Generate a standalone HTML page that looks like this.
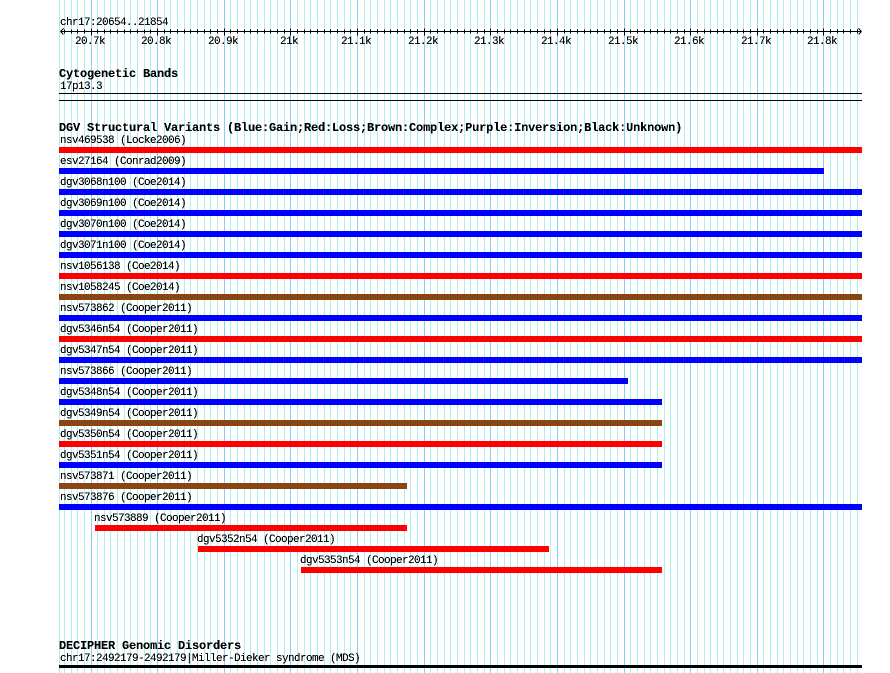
<!DOCTYPE html>
<html><head><meta charset="utf-8"><title>chr17 tracks</title>
<style>html,body{margin:0;padding:0;background:#fff;width:890px;height:673px;overflow:hidden}svg{display:block}
.s{font:11px "Liberation Mono",monospace;letter-spacing:-.6px;fill:#000}
.b{font:bold 12px "Liberation Mono",monospace;letter-spacing:-.2px;fill:#000}
</style></head><body>
<svg width="890" height="673" viewBox="0 0 890 673" xmlns="http://www.w3.org/2000/svg">
<defs><filter id="t" x="0" y="0" width="100%" height="100%" filterUnits="userSpaceOnUse" primitiveUnits="userSpaceOnUse"><feComponentTransfer><feFuncA type="linear" slope="2.2" intercept="-.35"/></feComponentTransfer></filter></defs>
<g shape-rendering="crispEdges" fill="none">
<path stroke="#afeeee" transform="translate(.5 0)" d="M59 0V673M64 0V673M71 0V673M77 0V673M84 0V673M97 0V673M104 0V673M110 0V673M117 0V673M124 0V673M130 0V673M137 0V673M144 0V673M150 0V673M164 0V673M170 0V673M177 0V673M184 0V673M190 0V673M197 0V673M204 0V673M210 0V673M217 0V673M230 0V673M237 0V673M244 0V673M250 0V673M257 0V673M264 0V673M270 0V673M277 0V673M284 0V673M297 0V673M304 0V673M310 0V673M317 0V673M324 0V673M330 0V673M337 0V673M344 0V673M350 0V673M364 0V673M370 0V673M377 0V673M384 0V673M390 0V673M397 0V673M404 0V673M410 0V673M417 0V673M430 0V673M437 0V673M444 0V673M450 0V673M457 0V673M464 0V673M470 0V673M477 0V673M484 0V673M497 0V673M504 0V673M510 0V673M517 0V673M524 0V673M530 0V673M537 0V673M544 0V673M550 0V673M564 0V673M570 0V673M577 0V673M584 0V673M590 0V673M597 0V673M604 0V673M610 0V673M617 0V673M630 0V673M637 0V673M644 0V673M650 0V673M657 0V673M664 0V673M670 0V673M677 0V673M684 0V673M697 0V673M704 0V673M710 0V673M717 0V673M723 0V673M730 0V673M737 0V673M743 0V673M750 0V673M763 0V673M770 0V673M777 0V673M783 0V673M790 0V673M797 0V673M803 0V673M810 0V673M817 0V673M830 0V673M837 0V673M843 0V673M850 0V673M857 0V673"/>
<path stroke="#87cefa" transform="translate(.5 0)" d="M91 0V673M157 0V673M224 0V673M290 0V673M357 0V673M424 0V673M490 0V673M557 0V673M624 0V673M690 0V673M757 0V673M823 0V673"/>
<path stroke="#000" transform="translate(.5 .5)" d="M60 31H861M60 31L63 28M60 31L63 34M861 31L858 28M861 31L858 34M64 29V33M71 29V33M77 29V33M84 29V33M97 29V33M104 29V33M110 29V33M117 29V33M124 29V33M130 29V33M137 29V33M144 29V33M150 29V33M164 29V33M170 29V33M177 29V33M184 29V33M190 29V33M197 29V33M204 29V33M210 29V33M217 29V33M230 29V33M237 29V33M244 29V33M250 29V33M257 29V33M264 29V33M270 29V33M277 29V33M284 29V33M297 29V33M304 29V33M310 29V33M317 29V33M324 29V33M330 29V33M337 29V33M344 29V33M350 29V33M364 29V33M370 29V33M377 29V33M384 29V33M390 29V33M397 29V33M404 29V33M410 29V33M417 29V33M430 29V33M437 29V33M444 29V33M450 29V33M457 29V33M464 29V33M470 29V33M477 29V33M484 29V33M497 29V33M504 29V33M510 29V33M517 29V33M524 29V33M530 29V33M537 29V33M544 29V33M550 29V33M564 29V33M570 29V33M577 29V33M584 29V33M590 29V33M597 29V33M604 29V33M610 29V33M617 29V33M630 29V33M637 29V33M644 29V33M650 29V33M657 29V33M664 29V33M670 29V33M677 29V33M684 29V33M697 29V33M704 29V33M710 29V33M717 29V33M723 29V33M730 29V33M737 29V33M743 29V33M750 29V33M763 29V33M770 29V33M777 29V33M783 29V33M790 29V33M797 29V33M803 29V33M810 29V33M817 29V33M830 29V33M837 29V33M843 29V33M850 29V33M857 29V33M91 28V35M157 28V35M224 28V35M290 28V35M357 28V35M424 28V35M490 28V35M557 28V35M624 28V35M690 28V35M757 28V35M823 28V35"/>
</g>
<g shape-rendering="crispEdges">
<rect x="59" y="93" width="803" height="1" fill="#000"/>
<rect x="59" y="100" width="803" height="1" fill="#000"/>
<rect x="59" y="147" width="803" height="6" fill="#f00"/>
<rect x="59" y="168" width="765" height="6" fill="#00f"/>
<rect x="59" y="189" width="803" height="6" fill="#00f"/>
<rect x="59" y="210" width="803" height="6" fill="#00f"/>
<rect x="59" y="231" width="803" height="6" fill="#00f"/>
<rect x="59" y="252" width="803" height="6" fill="#00f"/>
<rect x="59" y="273" width="803" height="6" fill="#f00"/>
<rect x="59" y="294" width="803" height="6" fill="#8b4513"/>
<rect x="59" y="315" width="803" height="6" fill="#00f"/>
<rect x="59" y="336" width="803" height="6" fill="#f00"/>
<rect x="59" y="357" width="803" height="6" fill="#00f"/>
<rect x="59" y="378" width="569" height="6" fill="#00f"/>
<rect x="59" y="399" width="603" height="6" fill="#00f"/>
<rect x="59" y="420" width="603" height="6" fill="#8b4513"/>
<rect x="59" y="441" width="603" height="6" fill="#f00"/>
<rect x="59" y="462" width="603" height="6" fill="#00f"/>
<rect x="59" y="483" width="348" height="6" fill="#8b4513"/>
<rect x="59" y="504" width="803" height="6" fill="#00f"/>
<rect x="95" y="525" width="312" height="6" fill="#f00"/>
<rect x="198" y="546" width="351" height="6" fill="#f00"/>
<rect x="301" y="567" width="361" height="6" fill="#f00"/>
<rect x="59" y="665" width="803" height="3" fill="#000"/>
</g>
<g filter="url(#t)">
<text class="s" x="60" y="25">chr17:20654..21854</text>
<text class="s" x="75" y="44">20.7k</text>
<text class="s" x="141" y="44">20.8k</text>
<text class="s" x="208" y="44">20.9k</text>
<text class="s" x="280" y="44">21k</text>
<text class="s" x="341" y="44">21.1k</text>
<text class="s" x="408" y="44">21.2k</text>
<text class="s" x="474" y="44">21.3k</text>
<text class="s" x="541" y="44">21.4k</text>
<text class="s" x="608" y="44">21.5k</text>
<text class="s" x="674" y="44">21.6k</text>
<text class="s" x="741" y="44">21.7k</text>
<text class="s" x="807" y="44">21.8k</text>
<text class="b" x="59" y="77">Cytogenetic Bands</text>
<text class="s" x="60" y="89">17p13.3</text>
<text class="b" x="59" y="131">DGV Structural Variants (Blue:Gain;Red:Loss;Brown:Complex;Purple:Inversion;Black:Unknown)</text>
<text class="s" x="60" y="143">nsv469538 (Locke2006)</text>
<text class="s" x="60" y="164">esv27164 (Conrad2009)</text>
<text class="s" x="60" y="185">dgv3068n100 (Coe2014)</text>
<text class="s" x="60" y="206">dgv3069n100 (Coe2014)</text>
<text class="s" x="60" y="227">dgv3070n100 (Coe2014)</text>
<text class="s" x="60" y="248">dgv3071n100 (Coe2014)</text>
<text class="s" x="60" y="269">nsv1056138 (Coe2014)</text>
<text class="s" x="60" y="290">nsv1058245 (Coe2014)</text>
<text class="s" x="60" y="311">nsv573862 (Cooper2011)</text>
<text class="s" x="60" y="332">dgv5346n54 (Cooper2011)</text>
<text class="s" x="60" y="353">dgv5347n54 (Cooper2011)</text>
<text class="s" x="60" y="374">nsv573866 (Cooper2011)</text>
<text class="s" x="60" y="395">dgv5348n54 (Cooper2011)</text>
<text class="s" x="60" y="416">dgv5349n54 (Cooper2011)</text>
<text class="s" x="60" y="437">dgv5350n54 (Cooper2011)</text>
<text class="s" x="60" y="458">dgv5351n54 (Cooper2011)</text>
<text class="s" x="60" y="479">nsv573871 (Cooper2011)</text>
<text class="s" x="60" y="500">nsv573876 (Cooper2011)</text>
<text class="s" x="94" y="521">nsv573889 (Cooper2011)</text>
<text class="s" x="197" y="542">dgv5352n54 (Cooper2011)</text>
<text class="s" x="300" y="563">dgv5353n54 (Cooper2011)</text>
<text class="b" x="59" y="649">DECIPHER Genomic Disorders</text>
<text class="s" x="60" y="661">chr17:2492179-2492179|Miller-Dieker syndrome (MDS)</text>
</g>
</svg>
</body></html>
